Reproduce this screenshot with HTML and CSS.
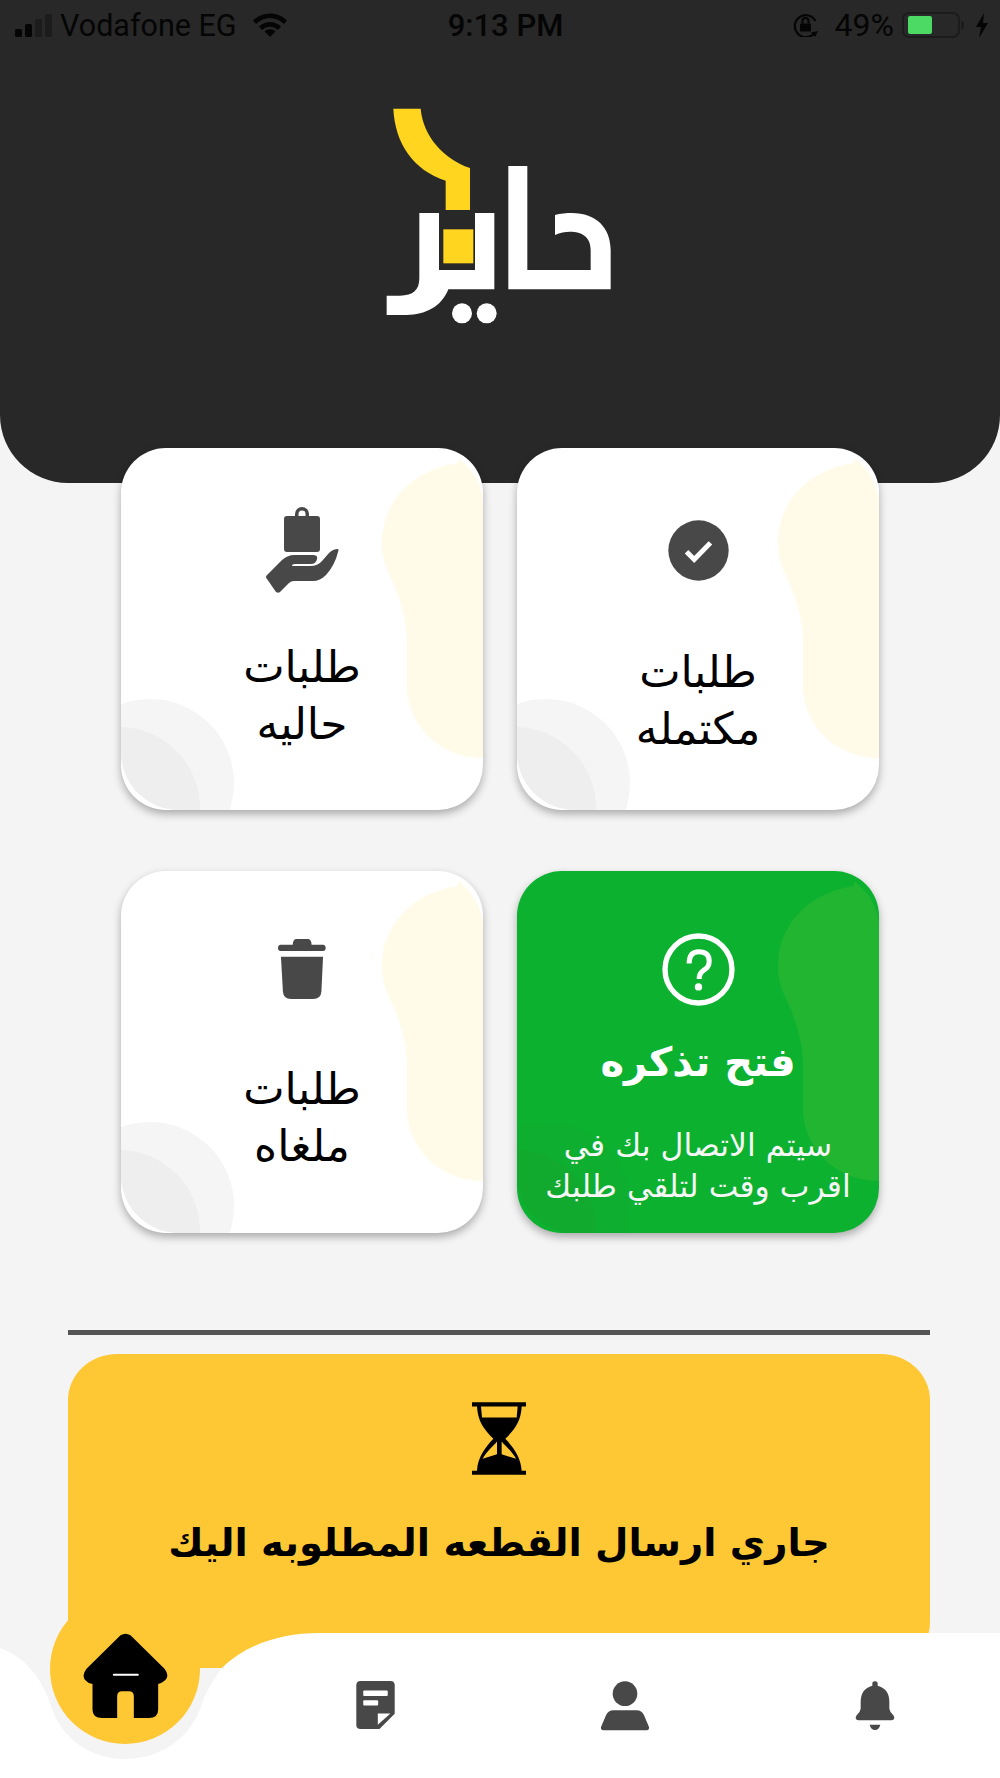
FILE: index.html
```html
<!DOCTYPE html>
<html lang="ar">
<head>
<meta charset="utf-8">
<title>حاير</title>
<link rel="stylesheet" href="styles.css">
</head>
<body>
<div class="screen">
  <header class="hero">
    <div class="status">
      <div class="status-side">
        <svg class="ic-signal" viewBox="0 0 37 23"><rect x="0" y="15" width="7" height="8" rx="1.500"/><rect x="10" y="10" width="7" height="13" rx="1.500"/><rect class="dim" x="20" y="5" width="7" height="18" rx="1.500"/><rect class="dim" x="30" y="0" width="7" height="23" rx="1.500"/></svg>
        <span class="carrier">Vodafone EG</span>
        <svg class="ic-wifi" viewBox="0 0 34 24"><path d="M0 7.500C9-2 25-2 34 7.500l-3 3.500C23 3 11 3 3 11z"/><path d="M6 13.500c6-6 16-6 22 0l-3 3.500c-4.500-4.500-11.500-4.500-16 0z"/><path d="M11.500 18.500c3-3 8-3 11 0L17 24z"/></svg>
      </div>
      <div class="clock">9:13 PM</div>
      <div class="status-side status-end">
        <svg class="ic-lock" viewBox="0 0 29 24"><path class="ring" d="M23 20.500A11 11 0 1 1 24.500 8"/><path d="M27 18l-7 1.500 4 4.500z"/><rect x="9" y="10.500" width="11" height="8" rx="1"/><path class="ring" d="M11.500 10.500V8a3 3 0 0 1 6 0v2.500"/></svg>
        <span class="pct">49%</span>
        <div class="battery"><div class="battery-fill"></div></div>
        <div class="battery-nub"></div>
        <svg class="ic-bolt" viewBox="0 0 12 25"><path d="M8 0 0 14h5l-2 11 9-15H7z"/></svg>
      </div>
    </div>
    <svg class="logo" viewBox="0 0 960 780">
      <path class="logo-y" d="M160 56H242C250 140 310 205 390 234V360H317V272C220 240 165 160 160 56Z"/>
      <path class="logo-w" d="M505 228H562V540H752V480C752 440 725 425 690 425C675 425 660 428 645 435V375C660 371 680 369 695 369C770 369 812 415 812 480V598H505Z"/>
      <path class="logo-w" d="M238 369H297V540H405V369H463V598H325C305 650 255 675 200 675H140V617H180C220 617 238 600 238 565Z"/>
      <rect class="logo-y" x="310" y="418" width="90" height="102"/>
      <circle class="logo-w" cx="366" cy="670" r="30"/>
      <circle class="logo-w" cx="440" cy="670" r="30"/>
    </svg>
  </header>

  <main class="content">
    <section class="grid">
      <article class="card">
        <svg class="deco" viewBox="0 0 362 362"><defs><clipPath id="deco-clip"><rect width="362" height="362" rx="58"/></clipPath></defs><g clip-path="url(#deco-clip)"><path class="blob" d="M337 15C290 22 261 55 261 95C261 115 268 125 274 139C284 165 286 180 286 195V242C290 285 325 310 362 310V0H337Z"/><circle class="c-out" cx="29" cy="335" r="84"/><circle class="c-in" cx="-2" cy="360" r="81"/></g></svg>
        <div class="card-icon-box"><svg class="ic-check" viewBox="502 266 184 184"><circle class="icon-fill" cx="594" cy="358" r="91"/><path class="check" d="M558 362 581 385 630 335"/></svg></div>
        <h2 class="card-title title-low">طلبات<br>مكتمله</h2>
      </article>

      <article class="card">
        <svg class="deco" viewBox="0 0 362 362"><g clip-path="url(#deco-clip)"><path class="blob" d="M337 15C290 22 261 55 261 95C261 115 268 125 274 139C284 165 286 180 286 195V242C290 285 325 310 362 310V0H337Z"/><circle class="c-out" cx="29" cy="335" r="84"/><circle class="c-in" cx="-2" cy="360" r="81"/></g></svg>
        <div class="card-icon-box"><svg class="ic-hand" viewBox="0 0 73 87"><path class="icon-fill" d="M21 9h8V7a7 7 0 0 1 14 0v2h8q3 0 3 3v30q0 3-3 3H21q-3 0-3-3V12q0-3 3-3zm11.500 0h7V7a3.500 3.500 0 0 0-7 0z"/><path class="icon-fill" d="M1 68 16 53q6-5 12-5H47q5 0 4 4-1 5-6 5H29q-3 0-3 2h18q8 0 12-5l7-8q4-4 9-4 1 1 0 3-3 13-12 23-6 6-13 6H28q-3 0-5 2l-8 8q-2 3-5 1L1 72q-2-2 0-4z"/></svg></div>
        <h2 class="card-title">طلبات<br>حاليه</h2>
      </article>

      <article class="card card-green">
        <svg class="deco" viewBox="0 0 362 362"><g clip-path="url(#deco-clip)"><path class="blob" d="M337 15C290 22 261 55 261 95C261 115 268 125 274 139C284 165 286 180 286 195V242C290 285 325 310 362 310V0H337Z"/><circle class="c-out" cx="29" cy="335" r="84"/><circle class="c-in" cx="-2" cy="360" r="81"/></g></svg>
        <div class="card-icon-box box-up"><svg class="ic-question" viewBox="485 221 218 218"><circle class="q-ring" cx="594" cy="330" r="100"/><path class="q-mark" d="M566 312Q566 277 595 277 626 277 626 305 626 322 610 332 596 341 596 358"/><circle class="q-dot" cx="594" cy="382" r="11"/></svg></div>
        <h2 class="ticket-title">فتح تذكره</h2>
        <p class="ticket-text">سيتم الاتصال بك في<br>اقرب وقت لتلقي طلبك</p>
      </article>

      <article class="card">
        <svg class="deco" viewBox="0 0 362 362"><g clip-path="url(#deco-clip)"><path class="blob" d="M337 15C290 22 261 55 261 95C261 115 268 125 274 139C284 165 286 180 286 195V242C290 285 325 310 362 310V0H337Z"/><circle class="c-out" cx="29" cy="335" r="84"/><circle class="c-in" cx="-2" cy="360" r="81"/></g></svg>
        <div class="card-icon-box box-up"><svg class="ic-trash" viewBox="53 28 146 186"><path class="icon-fill" d="M108 30H145Q155 32 155 47H190Q198 48 198 57 198 66 190 66H61Q53 66 53 57 53 48 61 47H98Q98 32 108 30Z"/><path class="icon-fill" d="M62 84H190L185 190Q183 212 160 212H92Q70 212 68 190Z"/></svg></div>
        <h2 class="card-title">طلبات<br>ملغاه</h2>
      </article>
    </section>

    <hr class="divider">

    <section class="notice">
      <svg class="ic-hourglass" viewBox="33 22 162 218"><path class="hourglass" fill-rule="evenodd" d="M33 22H195V35H182C180 80 160 105 133 132 160 160 180 190 182 228H195V240H33V228H48C50 190 70 160 97 132 70 105 50 80 48 35H33ZM60 35H170L167 68H63ZM108 140C96 155 76 170 65 192L108 178ZM122 140V178L165 192C154 170 134 155 122 140Z"/></svg>
      <h2 class="notice-title">جاري ارسال القطعه المطلوبه اليك</h2>
    </section>
  </main>

  <nav class="bottom-nav">
    <svg class="nav-bg" viewBox="0 0 1000 145"><path class="nav-shape" d="M0 15C20 22 40 40 50 70 60 105 90 126 125 126 160 126 192 105 202 70 208 55 215 45 222 35 245 12 280 0 320 0H1000V145H0Z"/></svg>
    <div class="fab"><svg class="ic-home" viewBox="248 215 254 258"><path d="M360 222Q375 212 390 222L492 322Q510 345 490 360 480 368 473 368V445Q473 470 445 470H400V405Q400 390 385 390H365Q350 390 350 405V470H305Q276 470 276 445V368Q265 368 258 360 240 345 258 322Z"/><rect class="home-line" x="337" y="337" width="78" height="6" rx="3"/></svg></div>
    <div class="nav-items">
      <span class="nav-item"></span>
      <span class="nav-item"><svg class="ic-doc" viewBox="1067 363 116 145"><path class="icon-fill" d="M1080 363H1170Q1183 363 1183 376V462L1137 508H1080Q1067 508 1067 495V376Q1067 363 1080 363Z"/><rect class="cut" x="1088" y="392" width="74" height="16" rx="3"/><rect class="cut" x="1088" y="421" width="45" height="16" rx="3"/><path class="cut" d="M1132 495V461H1170Z"/></svg></span>
      <span class="nav-item"><svg class="ic-user" viewBox="300 242 150 150"><circle class="icon-fill" cx="375" cy="280" r="37"/><path class="icon-fill" d="M340 330H410Q425 330 432 345L447 380Q448 390 440 390H310Q302 390 303 380L318 345Q325 330 340 330Z"/></svg></span>
      <span class="nav-item"><svg class="ic-bell" viewBox="1065 242 120 150"><path class="icon-fill" d="M1117 250Q1117 243 1125 243 1133 243 1133 250V256Q1168 265 1168 305V325Q1170 337 1180 345 1188 358 1175 360H1075Q1062 358 1070 345 1080 337 1082 325V305Q1082 265 1117 256Z"/><path class="icon-fill" d="M1109 373H1141Q1137 389 1125 389 1113 389 1109 373Z"/></svg></span>
    </div>
  </nav>
</div>
</body>
</html>
```

FILE: styles.css
```css
* { box-sizing: border-box; }
html, body { margin: 0; padding: 0; }
body { background: #f4f4f4; font-family: "DejaVu Sans", sans-serif; color: #000; }
h2, p { margin: 0; font-weight: 400; }

.screen { position: relative; width: 1000px; height: 1778px; overflow: hidden; background: #f4f4f4; }

/* header */
.hero { height: 483px; background: #282828; border-radius: 0 0 68px 68px; }
.status { display: grid; grid-template-columns: 1fr auto 1fr; align-items: center; height: 50px; padding: 0 12px 0 15px; color: #050505; font-family: Roboto, sans-serif; font-size: 30.5px; }
.status svg { display: block; fill: #050505; flex: none; }
.status-side { display: flex; align-items: center; }
.status-end { justify-content: flex-end; }
.clock { font-weight: 500; font-size: 31px; padding-left: 8px; }
.ic-signal { width: 37px; height: 23px; margin-right: 8px; }
.dim { fill: #1c1c1c; }
.carrier { margin-right: 16px; }
.ic-wifi { width: 34px; height: 24px; }
.ic-lock { width: 29px; height: 24px; margin-right: 15px; }
.ring { fill: none; stroke: #050505; stroke-width: 2.200; }
.pct { font-size: 32px; margin-right: 8px; }
.battery { width: 58px; height: 26px; border: 2px solid #1c1c1c; border-radius: 7px; padding: 2px 4px; }
.battery-fill { width: 24px; height: 100%; background: #4cd964; border-radius: 2px; }
.battery-nub { width: 3px; height: 8px; margin: 0 12px 0 1px; background: #1c1c1c; border-radius: 0 2px 2px 0; }
.ic-bolt { width: 12px; height: 25px; }

.logo { display: block; width: 320px; height: 260px; margin: 40px auto 0; }
.logo-y { fill: #ffd51f; }
.logo-w { fill: #fff; }

/* cards */
.content { display: flex; flex-direction: column; margin-top: -35px; position: relative; }
.grid { direction: rtl; display: grid; grid-template-columns: 362px 362px; gap: 61px 34px; justify-content: center; }
.card { position: relative; height: 362px; background: #fff; border-radius: 45px; box-shadow: 0 4px 8px rgba(0,0,0,.3); display: flex; flex-direction: column; align-items: center; padding-top: 59px; text-align: center; overflow: hidden; }
.deco { position: absolute; left: 0; top: 0; width: 362px; height: 362px; }
.blob { fill: #fffbe8; }
.c-out { fill: #f5f5f5; }
.c-in { fill: #eee; }
.card-icon-box { position: relative; height: 86px; display: flex; align-items: center; justify-content: center; }
.box-up { margin-top: -4px; }
.icon-fill { fill: #484848; }
.ic-check { width: 61px; height: 61px; }
.check { fill: none; stroke: #fff; stroke-width: 15; }
.ic-hand { width: 73px; height: 87px; }
.ic-trash { width: 48px; height: 62px; }
.ic-question { width: 73px; height: 73px; }
.q-ring { fill: none; stroke: #fff; stroke-width: 16; }
.q-mark { fill: none; stroke: #fff; stroke-width: 15; }
.q-dot { fill: #fff; }
.card-title { position: relative; font-size: 44px; line-height: 57px; margin-top: 45px; }
.box-up + .card-title { margin-top: 48px; }
.title-low { margin-top: 50px; }

.card-green { background: #0cb130; color: #fff; }
.card-green .blob { fill: #22b531; }
.card-green .c-out { fill: #0eae30; }
.card-green .c-in { fill: #12a92f; }
.ticket-title { position: relative; font-size: 40px; font-weight: 700; line-height: 50px; margin-top: 25px; }
.ticket-text { position: relative; font-size: 31.5px; line-height: 41px; margin-top: 38px; color: #f6f6f6; white-space: nowrap; }

/* notice */
.divider { width: 862px; height: 5px; margin: 97px 0 0 68px; border: 0; background: #555; }
.notice { width: 862px; height: 314px; margin: 19px 0 0 68px; background: #fec835; border-radius: 49px 49px 46px 46px / 46px; display: flex; flex-direction: column; align-items: center; padding-top: 48px; }
.ic-hourglass { width: 54px; height: 73px; }
.hourglass { fill: #000; }
.notice-title { font-size: 38.6px; font-weight: 700; line-height: 56px; margin-top: 40px; }

/* bottom nav */
.bottom-nav { position: absolute; left: 0; right: 0; bottom: 0; height: 145px; }
.nav-bg { position: absolute; left: 0; top: 0; width: 1000px; height: 145px; }
.nav-shape { fill: #fff; }
.fab { position: absolute; left: 50px; top: -39px; width: 150px; height: 150px; border-radius: 50%; background: #fec835; display: flex; justify-content: center; padding-top: 39px; }
.ic-home { width: 85px; height: 86px; fill: #000; }
.home-line { fill: #fff; }
.nav-items { position: relative; display: grid; grid-template-columns: repeat(4, 250px); padding-top: 48px; }
.nav-item { display: flex; justify-content: center; }
.ic-doc { width: 39px; height: 48px; }
.cut { fill: #fff; }
.ic-user { width: 50px; height: 50px; }
.ic-bell { width: 40px; height: 50px; }
```
